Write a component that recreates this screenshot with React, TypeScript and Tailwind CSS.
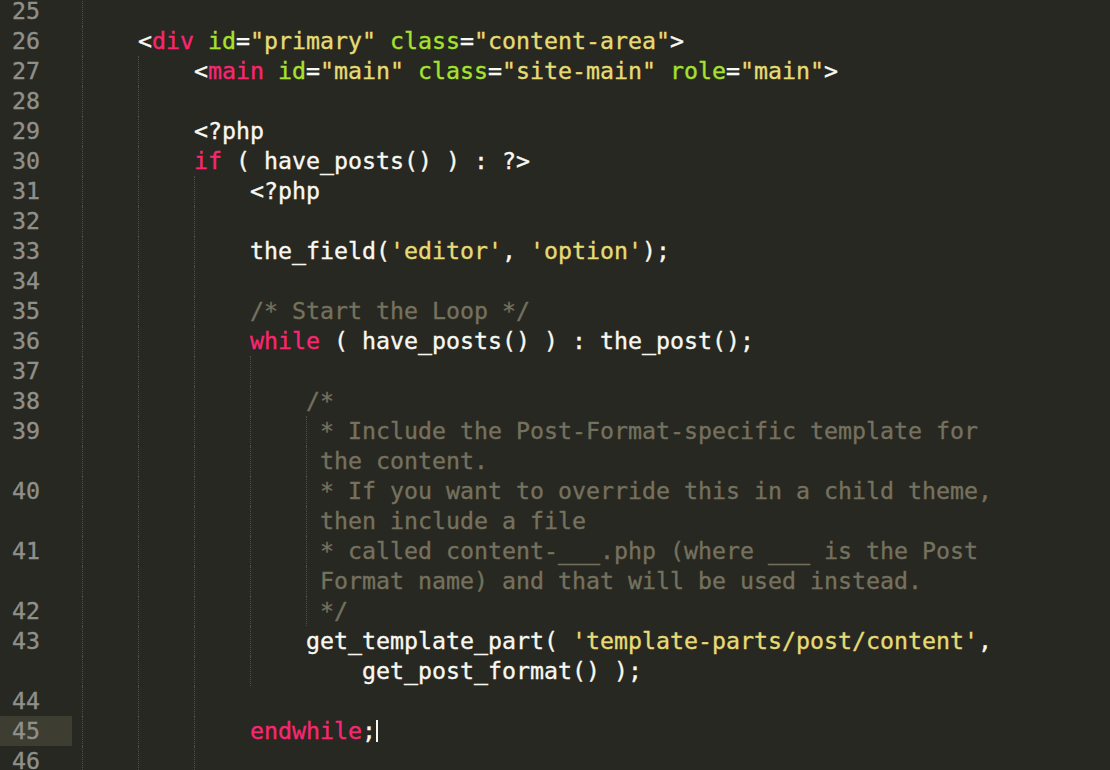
import React from 'react';

type Seg = { t: string; c?: 'w' | 'k' | 'a' | 's' | 'm' };
type Row = {
  num?: number;
  guides: number; // indent guides drawn on this row
  indent: number; // indent in characters from the code origin
  segs: Seg[];
  active?: boolean;
  cursor?: boolean;
};

const colorOf: Record<string, string> = {
  w: 'text-[#f8f8f2]',
  k: 'text-[#f92672]',
  a: 'text-[#a6e22e]',
  s: 'text-[#e6db74]',
  m: 'text-[#75715e]',
};

const w = (t: string): Seg => ({ t, c: 'w' });
const k = (t: string): Seg => ({ t, c: 'k' });
const a = (t: string): Seg => ({ t, c: 'a' });
const s = (t: string): Seg => ({ t, c: 's' });
const m = (t: string): Seg => ({ t, c: 'm' });

const CH = 14; // char advance in px

const rows: Row[] = [
  { num: 25, guides: 1, indent: 0, segs: [] },
  {
    num: 26, guides: 1, indent: 4,
    segs: [w('<'), k('div'), w(' '), a('id'), w('='), s('"primary"'), w(' '), a('class'), w('='), s('"content-area"'), w('>')],
  },
  {
    num: 27, guides: 2, indent: 8,
    segs: [w('<'), k('main'), w(' '), a('id'), w('='), s('"main"'), w(' '), a('class'), w('='), s('"site-main"'), w(' '), a('role'), w('='), s('"main"'), w('>')],
  },
  { num: 28, guides: 2, indent: 0, segs: [] },
  { num: 29, guides: 2, indent: 8, segs: [w('<?php')] },
  { num: 30, guides: 2, indent: 8, segs: [k('if'), w(' ( have_posts() ) : ?>')] },
  { num: 31, guides: 3, indent: 12, segs: [w('<?php')] },
  { num: 32, guides: 3, indent: 0, segs: [] },
  { num: 33, guides: 3, indent: 12, segs: [w('the_field('), s("'editor'"), w(', '), s("'option'"), w(');')] },
  { num: 34, guides: 3, indent: 0, segs: [] },
  { num: 35, guides: 3, indent: 12, segs: [m('/* Start the Loop */')] },
  { num: 36, guides: 3, indent: 12, segs: [k('while'), w(' ( have_posts() ) : the_post();')] },
  { num: 37, guides: 4, indent: 0, segs: [] },
  { num: 38, guides: 4, indent: 16, segs: [m('/*')] },
  { num: 39, guides: 5, indent: 17, segs: [m('* Include the Post-Format-specific template for')] },
  { guides: 5, indent: 17, segs: [m('the content.')] },
  { num: 40, guides: 5, indent: 17, segs: [m('* If you want to override this in a child theme,')] },
  { guides: 5, indent: 17, segs: [m('then include a file')] },
  { num: 41, guides: 5, indent: 17, segs: [m('* called content-___.php (where ___ is the Post')] },
  { guides: 5, indent: 17, segs: [m('Format name) and that will be used instead.')] },
  { num: 42, guides: 5, indent: 17, segs: [m('*/')] },
  { num: 43, guides: 4, indent: 16, segs: [w('get_template_part( '), s("'template-parts/post/content'"), w(',')] },
  { guides: 4, indent: 20, segs: [w('get_post_format() );')] },
  { num: 44, guides: 3, indent: 0, segs: [] },
  { num: 45, guides: 3, indent: 12, segs: [k('endwhile'), w(';')], active: true, cursor: true },
  { num: 46, guides: 3, indent: 0, segs: [] },
];

const CodeRow: React.FC<{ row: Row }> = ({ row }) => {
  const hasText = row.segs.length > 0;
  const widths = Array.from({ length: row.guides }, (_, i) => {
    if (i < row.guides - 1 || !hasText) return 4 * CH;
    return (row.indent - 4 * i) * CH;
  });
  return (
    <div className="flex h-[30px] items-center">
      <div
        className={`h-full w-[72px] shrink-0 pl-[12px] leading-[30px] text-[#90908a] ${
          row.active ? 'bg-[#3e3d32]' : ''
        }`}
      >
        {row.num ?? ''}
      </div>
      <div className="flex h-full pl-[10px]">
        {widths.map((wd, i) => (
          <span
            key={i}
            className="block h-full shrink-0 border-l border-dotted border-[#4f4f47]"
            style={{ width: wd }}
          />
        ))}
        <span className="whitespace-pre leading-[30px]">
          {row.segs.map((sg, i) => (
            <span key={i} className={colorOf[sg.c ?? 'w']}>
              {sg.t}
            </span>
          ))}
        </span>
        {row.cursor && <span className="my-[4px] w-[2px] bg-[#f8f8f0]" />}
      </div>
    </div>
  );
};

const App: React.FC = () => {
  return (
    <div
      className="h-[770px] w-[1110px] overflow-hidden bg-[#272822] text-[23.25px] text-[#f8f8f2] antialiased [-webkit-text-stroke:0.35px_currentColor]"
      style={{ fontFamily: '"DejaVu Sans Mono", "Liberation Mono", monospace' }}
    >
      <div className="-mt-[4px]">
        {rows.map((r, i) => (
          <CodeRow key={i} row={r} />
        ))}
      </div>
    </div>
  );
};

export default App;
